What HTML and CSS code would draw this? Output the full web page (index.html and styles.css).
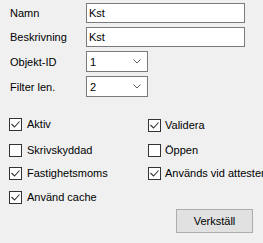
FILE: index.html
```html
<!DOCTYPE html>
<html lang="sv">
<head>
<meta charset="utf-8">
<link rel="stylesheet" href="styles.css">
</head>
<body>
<div class="panel">
  <div class="form">
    <label class="lbl">Namn</label>
    <div class="textbox">Kst</div>
    <label class="lbl">Beskrivning</label>
    <div class="textbox">Kst</div>
    <label class="lbl">Objekt-ID</label>
    <div class="combo"><span>1</span><svg class="chev" width="8" height="5" viewBox="0 0 8 5"><polyline points="0.5,0.5 4,4 7.5,0.5" fill="none" stroke="#606060" stroke-width="1"/></svg></div>
    <label class="lbl">Filter len.</label>
    <div class="combo"><span>2</span><svg class="chev" width="8" height="5" viewBox="0 0 8 5"><polyline points="0.5,0.5 4,4 7.5,0.5" fill="none" stroke="#606060" stroke-width="1"/></svg></div>
  </div>

  <div class="checks">
    <div class="col left">
      <div class="chk r1"><span class="box checked"><svg width="11" height="11" viewBox="0 0 11 11"><polyline points="1.5,5 4.5,8 9.5,2.5" fill="none" stroke="#333" stroke-width="1.1"/></svg></span><span class="txt">Aktiv</span></div>
      <div class="chk r2"><span class="box"></span><span class="txt">Skrivskyddad</span></div>
      <div class="chk r3"><span class="box checked"><svg width="11" height="11" viewBox="0 0 11 11"><polyline points="1.5,5 4.5,8 9.5,2.5" fill="none" stroke="#333" stroke-width="1.1"/></svg></span><span class="txt">Fastighetsmoms</span></div>
      <div class="chk r4"><span class="box checked"><svg width="11" height="11" viewBox="0 0 11 11"><polyline points="1.5,5 4.5,8 9.5,2.5" fill="none" stroke="#333" stroke-width="1.1"/></svg></span><span class="txt">Använd cache</span></div>
    </div>
    <div class="col right">
      <div class="chk r1"><span class="box checked"><svg width="11" height="11" viewBox="0 0 11 11"><polyline points="1.5,5 4.5,8 9.5,2.5" fill="none" stroke="#333" stroke-width="1.1"/></svg></span><span class="txt">Validera</span></div>
      <div class="chk r2"><span class="box"></span><span class="txt">Öppen</span></div>
      <div class="chk r3"><span class="box checked"><svg width="11" height="11" viewBox="0 0 11 11"><polyline points="1.5,5 4.5,8 9.5,2.5" fill="none" stroke="#333" stroke-width="1.1"/></svg></span><span class="txt">Används vid attestering</span></div>
    </div>
  </div>

  <div class="actions">
    <button class="btn">Verkställ</button>
  </div>
</div>
</body>
</html>
```

FILE: styles.css
```css
html, body {
  margin: 0;
  padding: 0;
}
body {
  width: 263px;
  height: 243px;
  overflow: hidden;
  background: #f0f0f0;
  font-family: "Liberation Sans", Arial, sans-serif;
  font-size: 11px;
  color: #000;
}
.panel {
  width: 263px;
  height: 243px;
  box-sizing: border-box;
  padding-top: 3px;
  overflow: hidden;
}
.form {
  display: grid;
  grid-template-columns: 86px 159px;
  grid-template-rows: 20px 20px 21px 21px;
  row-gap: 4px;
  align-items: center;
}
.lbl {
  padding-left: 10px;
  white-space: nowrap;
}
.textbox {
  height: 20px;
  box-sizing: border-box;
  border: 1px solid #7a7a7a;
  background: #fff;
  padding-left: 2px;
  line-height: 18px;
}
.combo {
  width: 62px;
  height: 21px;
  box-sizing: border-box;
  border: 1px solid #7a7a7a;
  background: #fff;
  display: flex;
  align-items: center;
  justify-content: space-between;
  padding: 0 6px 0 3px;
}
.chev {
  display: block;
}
.checks {
  display: flex;
  margin-top: 21px;
}
.col {
  display: grid;
  grid-template-rows: 26px 23px 24px 13px;
}
.col.left {
  padding-left: 9px;
  width: 148px;
  box-sizing: border-box;
}
.col.right {
  width: 106px;
  white-space: nowrap;
  overflow: visible;
}
.chk {
  display: flex;
  align-items: flex-start;
  height: 13px;
  white-space: nowrap;
}
.col.right .r1 {
  margin-top: 1px;
}
.box {
  width: 13px;
  height: 13px;
  box-sizing: border-box;
  border: 1px solid #333;
  background: #fff;
  flex: none;
  display: flex;
  align-items: center;
  justify-content: center;
}
.box svg {
  display: block;
}
.txt {
  margin-left: 5px;
  line-height: 13px;
}
.col.right .txt {
  margin-left: 4px;
}
.actions {
  display: flex;
  justify-content: flex-end;
  padding-right: 10px;
  margin-top: 5px;
}
.btn {
  width: 77px;
  height: 24px;
  box-sizing: border-box;
  border: 1px solid #adadad;
  background: #e1e1e1;
  font-family: "Liberation Sans", Arial, sans-serif;
  font-size: 11px;
  color: #000;
  padding: 0;
  border-radius: 0;
}
```
